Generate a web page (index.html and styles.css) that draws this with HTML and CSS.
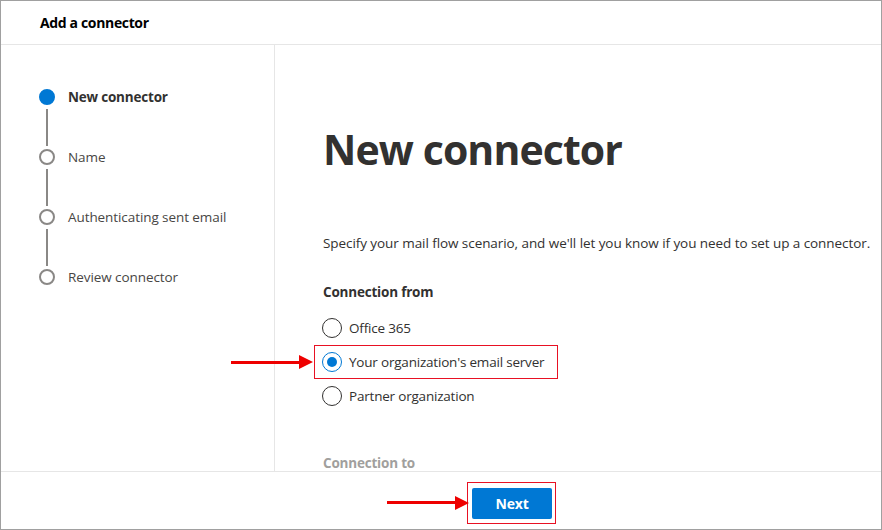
FILE: index.html
```html
<!DOCTYPE html>
<html>
<head>
<meta charset="utf-8">
<link rel="stylesheet" href="styles.css">
</head>
<body>
<div class="frame">
  <header class="topbar"><span class="title">Add a connector</span></header>
  <div class="content">
    <nav class="steps">
      <div class="step active">
        <div class="marker"><span class="dot"></span><span class="line"></span></div>
        <div class="label">New connector</div>
      </div>
      <div class="step">
        <div class="marker"><span class="dot"></span><span class="line"></span></div>
        <div class="label">Name</div>
      </div>
      <div class="step">
        <div class="marker"><span class="dot"></span><span class="line"></span></div>
        <div class="label">Authenticating sent email</div>
      </div>
      <div class="step last">
        <div class="marker"><span class="dot"></span></div>
        <div class="label">Review connector</div>
      </div>
    </nav>
    <main class="main">
      <h1 class="heading">New connector</h1>
      <p class="desc">Specify your mail flow scenario, and we'll let you know if you need to set up a connector.</p>
      <div class="group-title">Connection from</div>
      <div class="options">
        <div class="option"><span class="radio"></span><span>Office 365</span></div>
        <div class="option selected">
          <span class="arrow arrow-opt"><span class="shaft"></span><span class="head"></span></span>
          <span class="radio"></span><span>Your organization's email server</span>
        </div>
        <div class="option"><span class="radio"></span><span>Partner organization</span></div>
      </div>
      <div class="group-title faded">Connection to</div>
    </main>
  </div>
  <footer class="footer">
    <div class="btn-wrap">
      <span class="arrow arrow-btn"><span class="shaft"></span><span class="head"></span></span>
      <button class="btn">Next</button>
    </div>
  </footer>
</div>
</body>
</html>
```
FILE: styles.css
```css
* { box-sizing: border-box; }
html, body { margin: 0; padding: 0; background: #fff; }
body { font-family: "Open Sans", "Noto Sans", sans-serif; color: #323130; }
.frame {
  width: 882px; height: 530px;
  border: 1px solid #a0a0a0;
  display: flex; flex-direction: column;
  overflow: hidden;
}
.topbar {
  height: 44px; flex: none;
  border-bottom: 1px solid #e6e6e6;
  display: flex; align-items: center;
  padding-left: 39px;
}
.title { font-size: 14px; font-weight: 700; color: #000; letter-spacing: -0.35px; }
.content { flex: 1; display: flex; min-height: 0; overflow: hidden; }
.steps {
  width: 274px; flex: none;
  border-right: 1px solid #e6e6e6;
  padding: 44px 0 0 38px;
}
.step { display: flex; height: 60px; }
.marker { width: 16px; display: flex; flex-direction: column; align-items: center; }
.dot {
  width: 16px; height: 16px; border-radius: 50%;
  border: 2px solid #8a8886; flex: none; background: #fff;
}
.step.active .dot { background: #0078d4; border-color: #0078d4; }
.line { width: 2px; flex: 1; background: #8a8886; margin: 4px 0 3px; }
.label {
  margin-left: 13px; font-size: 13.5px; line-height: 16px; color: #484644;
  letter-spacing: -0.08px;
}
.step.active .label { font-weight: 700; color: #323130; letter-spacing: -0.2px; }
.main { flex: 1; padding-left: 48px; position: relative; }
.heading {
  margin: 74px 0 0; font-size: 41px; line-height: 60px; font-weight: 700;
  color: #323130; letter-spacing: -0.9px;
}
.desc { margin: 54px 0 0; font-size: 13.5px; line-height: 20px; color: #323130; letter-spacing: -0.07px; }
.group-title { margin-top: 29px; font-size: 13.5px; font-weight: 700; line-height: 20px; letter-spacing: -0.2px; }
.options { margin-top: 9px; display: flex; flex-direction: column; gap: 0; }
.option {
  display: flex; align-items: center; height: 34px; gap: 7px;
  font-size: 13.5px; color: #323130; letter-spacing: -0.2px;
  position: relative; width: 244px; margin-left: -9px; padding-left: 8px;
}
.option.selected { border: 1px solid #e81123; padding-left: 7px; }
.radio {
  width: 20px; height: 20px; border-radius: 50%; border: 1px solid #323130;
  flex: none; position: relative;
}
.selected .radio { border-color: #0078d4; }
.selected .radio::after {
  content: ""; position: absolute; left: 4px; top: 4px;
  width: 10px; height: 10px; border-radius: 50%; background: #0078d4;
}
.faded { color: #a19f9d; margin-top: 40px; }
.arrow { position: absolute; display: flex; align-items: center; }
.shaft { width: 68px; height: 3px; background: #ee0000; }
.head {
  width: 0; height: 0; border-left: 14px solid #ee0000;
  border-top: 7px solid transparent; border-bottom: 7px solid transparent;
}
.arrow-opt { left: -84px; top: 50%; transform: translateY(-50%); }
.footer {
  height: 58px; flex: none; border-top: 1px solid #e6e6e6;
  display: flex; justify-content: center; align-items: center;
}
.btn-wrap {
  position: relative; border: 1px solid #e81123; padding: 5px 3px 4px 4px;
  margin-left: 141px; margin-top: 4px;
}
.btn {
  display: block; width: 80px; height: 31px; border: none; border-radius: 2px;
  background: #0078d4; color: #fff; font-family: inherit;
  font-size: 14px; font-weight: 700; letter-spacing: -0.2px;
}
.arrow-btn { left: -81px; top: 50%; transform: translateY(-50%); }
```
